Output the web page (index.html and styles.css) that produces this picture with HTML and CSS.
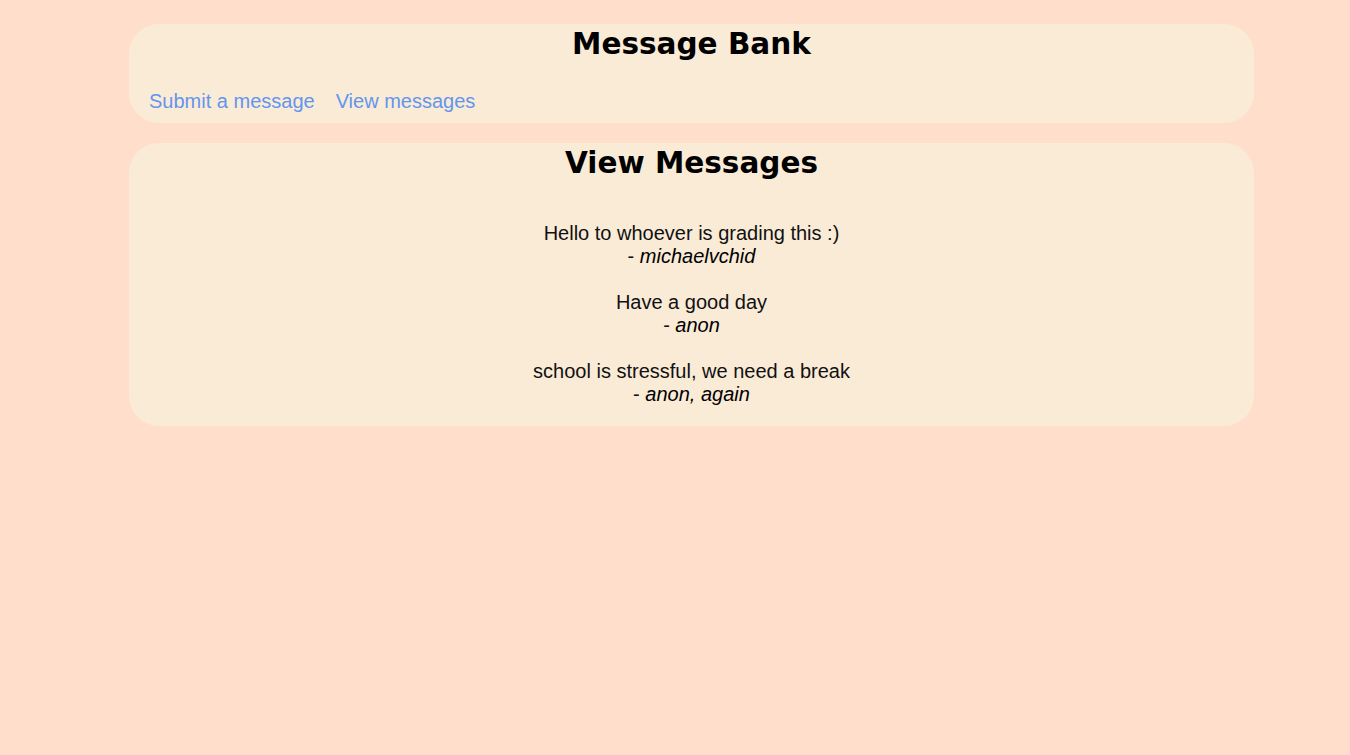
FILE: index.html
```html
<!DOCTYPE html>
<html lang="en">
<head>
<meta charset="utf-8">
<title>Message Bank</title>
<link rel="stylesheet" href="styles.css">
</head>
<body>
<main class="page">
  <header class="card header-card">
    <h1 class="title">Message Bank</h1>
    <nav class="nav">
      <a class="nav-link" href="#">Submit a message</a>
      <a class="nav-link" href="#">View messages</a>
    </nav>
  </header>
  <section class="card messages-card">
    <h1 class="title">View Messages</h1>
    <div class="messages">
      <p class="message">Hello to whoever is grading this :)<br><span class="author">- <em>michaelvchid</em></span></p>
      <p class="message">Have a good day<br><span class="author">- <em>anon</em></span></p>
      <p class="message">school is stressful, we need a break<br><span class="author">- <em>anon, again</em></span></p>
    </div>
  </section>
</main>
</body>
</html>
```

FILE: styles.css
```css
html, body {
  margin: 0;
  padding: 0;
}
body {
  background: #ffdecb;
  font-family: "Liberation Sans", Arial, sans-serif;
  color: #000;
  min-height: 755px;
}
.page {
  display: flex;
  flex-direction: column;
  gap: 20px;
  padding: 24px 96px 0 129px;
}
.card {
  background: #faebd7;
  border-radius: 30px;
}
.title {
  margin: 0;
  text-align: center;
  font-family: "DejaVu Sans", Verdana, sans-serif;
  font-weight: bold;
  font-size: 29.5px;
  line-height: 34px;
  padding-top: 3px;
}
.header-card {
  padding-bottom: 10px;
}
.nav {
  display: flex;
  gap: 21px;
  padding: 0 20px;
  margin-top: 29px;
}
.nav-link {
  color: #6495ed;
  text-decoration: none;
  font-size: 20px;
  line-height: 23px;
}
.messages {
  padding: 42px 20px 20px;
  text-align: center;
  font-size: 20px;
  line-height: 23px;
  color: #111;
}
.message {
  margin: 0 0 23px;
}
.message:last-child {
  margin-bottom: 0;
}
.author em {
  font-style: italic;
  color: #000;
}
```
